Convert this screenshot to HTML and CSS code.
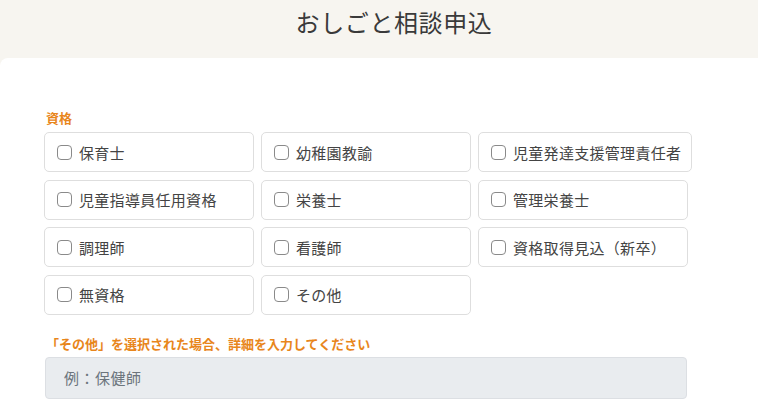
FILE: index.html
```html
<!DOCTYPE html>
<html lang="ja">
<head>
<meta charset="utf-8">
<link rel="stylesheet" href="styles.css">
</head>
<body>
<header class="head"><h1 class="title">おしごと相談申込</h1></header>
<main class="card">
  <div class="field">
    <div class="label">資格</div>
    <div class="options">
      <label class="opt"><span class="cb"></span>保育士</label>
      <label class="opt"><span class="cb"></span>幼稚園教諭</label>
      <label class="opt"><span class="cb"></span>児童発達支援管理責任者</label>
      <label class="opt"><span class="cb"></span>児童指導員任用資格</label>
      <label class="opt"><span class="cb"></span>栄養士</label>
      <label class="opt"><span class="cb"></span>管理栄養士</label>
      <label class="opt"><span class="cb"></span>調理師</label>
      <label class="opt"><span class="cb"></span>看護師</label>
      <label class="opt"><span class="cb"></span>資格取得見込（新卒）</label>
      <label class="opt"><span class="cb"></span>無資格</label>
      <label class="opt"><span class="cb"></span>その他</label>
    </div>
  </div>
  <div class="field field2">
    <div class="label">「その他」を選択された場合、詳細を入力してください</div>
    <div class="input">例：保健師</div>
  </div>
</main>
</body>
</html>
```
FILE: styles.css
```css
* { box-sizing: border-box; }
html, body { margin: 0; padding: 0; }
body {
  background: #f7f5f0;
  font-family: "Noto Sans CJK JP", "Noto Sans", sans-serif;
  color: #444;
  width: 758px;
  height: 400px;
  overflow: hidden;
}
.head {
  height: 58px;
  display: flex;
  justify-content: center;
  align-items: center;
  padding-left: 30px;
}
.title {
  margin: 0 0 14px 0;
  font-size: 24px;
  font-weight: 400;
  color: #3a3a3a;
  letter-spacing: 0.6px;
  line-height: 1;
}
.card {
  background: #fff;
  border-top-left-radius: 8px;
  padding: 51px 0 0 44px;
  height: 342px;
}
.label {
  color: #e8861c;
  font-size: 13px;
  font-weight: 700;
  line-height: 18px;
  margin-left: 2px;
  margin-bottom: 5px;
}
.options {
  display: flex;
  flex-wrap: wrap;
  gap: 7.5px 7px;
  width: 660px;
}
.opt {
  display: flex;
  align-items: center;
  gap: 7px;
  min-width: 210px;
  height: 40px;
  padding: 0 10px 0 12px;
  border: 1px solid #dedede;
  border-radius: 5px;
  font-size: 15px;
  letter-spacing: 0.3px;
  color: #444;
}
.cb {
  width: 15px;
  height: 15px;
  border: 1px solid #8a8a8a;
  border-radius: 4px;
  flex: none;
}
.field2 { margin-top: 20px; }
.field2 .label { margin-bottom: 4px; font-size: 13px; }
.input {
  width: 642px;
  height: 42px;
  margin-left: 1px;
  background: #e9ecef;
  border: 1px solid #dcdfe3;
  border-radius: 4px;
  padding: 0 18px;
  display: flex;
  align-items: center;
  color: #6c757d;
  font-size: 15px;
  letter-spacing: 0.5px;
}
```
